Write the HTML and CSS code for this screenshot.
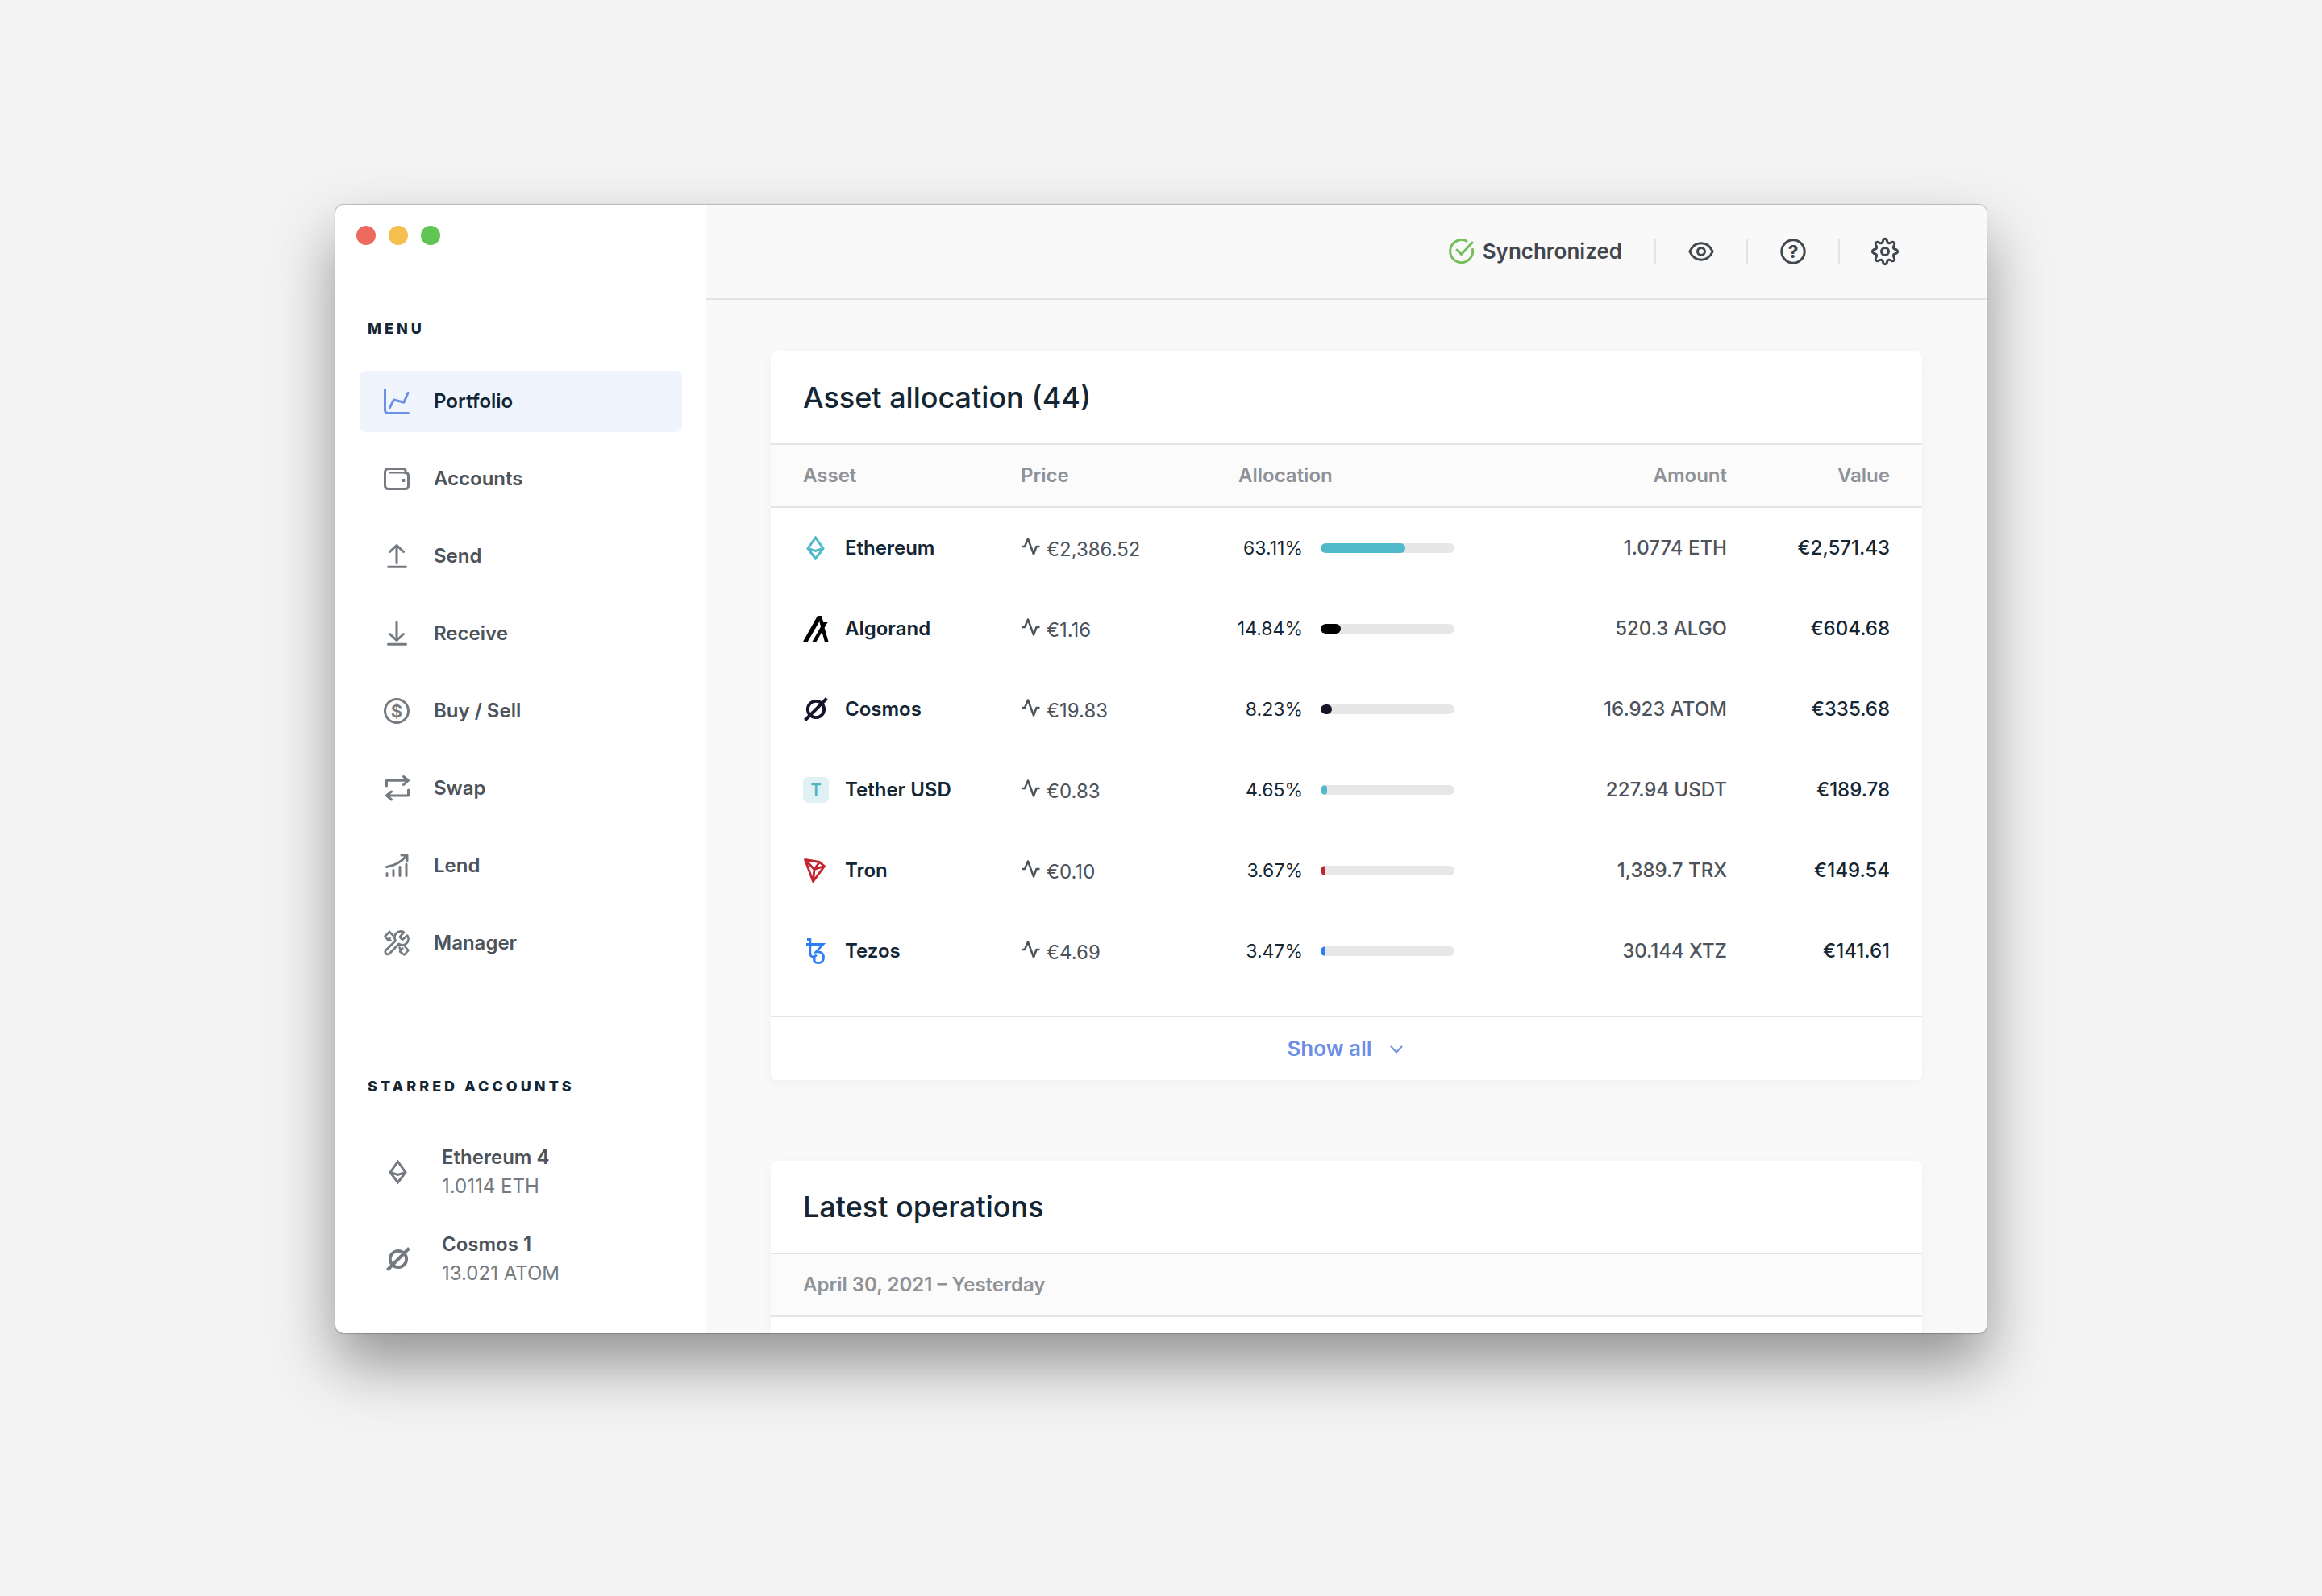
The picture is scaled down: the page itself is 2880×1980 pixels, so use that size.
FILE: index.html
```html
<!DOCTYPE html>
<html lang="en">

<head>
    <meta charset="UTF-8">
    <meta name="viewport" content="width=device-width, initial-scale=1.0">
    <title>Portfolio</title>
    <link rel="stylesheet" href="styles.css">
</head>

<body>

    <!-- Shared icons -->
    <svg class="sprite" aria-hidden="true">
        <symbol id="eth" viewBox="0 0 32 32">
            <path d="M15.500 3L25 16.500L15.500 29L6 16.500ZM6 16.500L15.500 19.500L25 16.500" fill="none" stroke="currentColor" stroke-width="3" />
        </symbol>
        <symbol id="atom" viewBox="0 0 32 32">
            <circle cx="16" cy="16" r="10.2" fill="none" stroke="currentColor" stroke-width="3.8" />
            <path d="M2.5 29.5L29.5 2.5" fill="none" stroke="currentColor" stroke-width="4" />
        </symbol>
        <symbol id="pulse" viewBox="0 0 24 24">
            <path d="M1 12H5L9 2.500L16 21.500L19.500 12H23.500" fill="none" stroke="currentColor" stroke-width="2.500" stroke-linejoin="round" />
        </symbol>
    </svg>

    <div class="window">
        <aside class="sidebar">
            <div class="lights">
                <span class="light red"></span>
                <span class="light yellow"></span>
                <span class="light green"></span>
            </div>

            <h2 class="side-title">MENU</h2>
            <nav class="menu">
                <a href="#" class="menu-item active">
                    <svg class="icon" viewBox="0 0 32 32"><path d="M1.500 1.500V26.500Q1.500 30.500 5.500 30.500H30.500M7.500 23.500L12.500 14L25 17.200L30 5.500" /></svg>
                    Portfolio
                </a>
                <a href="#" class="menu-item">
                    <svg class="icon" viewBox="0 0 32 32"><path d="M27 8V6Q27 3.500 24 3.500H6Q1.500 3.500 1.500 8V24Q1.500 28.500 6 28.500H26.500Q30.500 28.500 30.500 25V12Q30.500 8.500 26.500 8.500" /><path d="M7 8.500H27" stroke-width="2" /><rect class="solid" x="22.500" y="16" width="4" height="4" rx="1" /></svg>
                    Accounts
                </a>
                <a href="#" class="menu-item">
                    <svg class="icon" viewBox="0 0 32 32"><path d="M16 24.500V2.500M7.500 10.500L16 2.500L24.500 10.500M5.500 29.200H27.500" /></svg>
                    Send
                </a>
                <a href="#" class="menu-item">
                    <svg class="icon" viewBox="0 0 32 32"><path d="M16 2V24M7.500 16.500L16 24.500L24.500 16.500M5.500 29.200H27.500" /></svg>
                    Receive
                </a>
                <a href="#" class="menu-item">
                    <svg class="icon" viewBox="0 0 32 32"><circle cx="16" cy="16" r="14.500" /><text x="16" y="24" text-anchor="middle">$</text></svg>
                    Buy / Sell
                </a>
                <a href="#" class="menu-item">
                    <svg class="icon" viewBox="0 0 32 32"><path d="M3.500 13V6.200H30.500M24.500 1.500L30.500 6.200L24.500 11.500M30.500 18V25H3.500M9.500 20L3.500 25L9.500 30" /></svg>
                    Swap
                </a>
                <a href="#" class="menu-item">
                    <svg class="icon" viewBox="0 0 32 32"><path d="M3.500 17.500Q18 15.500 28.500 3.500M22 3H29V10M4 25.500V28.500M12 21.500V28.500M20 17.500V28.500M28 14V28.500" /></svg>
                    Lend
                </a>
                <a href="#" class="menu-item">
                    <svg class="icon" viewBox="0 0 32 32"><path transform="scale(1.333)" stroke-width="2.100" d="M15.500 5.600a1 1 0 0 0 0 1.400l1.200 1.300a1 1 0 0 0 1.400 0l3.800-3.300a5.600 5.600 0 0 1-7.900 7.700l-8.700 9a2.200 2.200 0 0 1-3.300-3.200l9-8.700a5.600 5.600 0 0 1 7.700-7.800z" /><path stroke-width="2.600" d="M11.500 6.500L7 2L1.500 7.500L5 12L7.500 9.500M8.500 12.500L5 12M19.500 21.500L21 24.500L23.500 22.500M21 24.500L20 26.500L25.500 30.500L30.500 25L26.500 20.500" /></svg>
                    Manager
                </a>
            </nav>

            <h2 class="side-title">STARRED ACCOUNTS</h2>
            <div class="starred">
                <a href="#" class="account">
                    <svg class="coin"><use href="#eth" /></svg>
                    <span><strong>Ethereum 4</strong><br>1.0114 ETH</span>
                </a>
                <a href="#" class="account">
                    <svg class="coin"><use href="#atom" /></svg>
                    <span><strong>Cosmos 1</strong><br>13.021 ATOM</span>
                </a>
            </div>
        </aside>

        <main class="main">
            <header class="topbar">
                <div class="sync">
                    <svg class="icon" viewBox="0 0 32 32"><path d="M22 3.200A14 14 0 1 0 29.500 13.500M10 14L15.500 19.500L29 5" /></svg>
                    Synchronized
                </div>
                <button class="tool" aria-label="Hide amounts">
                    <svg class="icon" viewBox="0 0 32 32"><path d="M1.800 16C5 9 10 5.800 16 5.800S27 9 30.200 16C27 23 22 26.200 16 26.200S5 23 1.800 16Z" /><circle cx="16" cy="16" r="4.500" /></svg>
                </button>
                <button class="tool" aria-label="Help">
                    <svg class="icon" viewBox="0 0 32 32"><circle cx="16" cy="16" r="14.200" /><text class="help" x="16" y="24" text-anchor="middle">?</text></svg>
                </button>
                <button class="tool" aria-label="Settings">
                    <svg class="icon" viewBox="0 0 32 32"><path d="M18.200 1.800C19 6 21 6.800 24.500 4.400A2.400 2.400 0 0 1 27.600 7.500C25.200 11 26 13 30.200 13.800A2.400 2.400 0 0 1 30.200 18.200C26 19 25.200 21 27.600 24.500A2.400 2.400 0 0 1 24.500 27.600C21 25.200 19 26 18.200 30.200A2.400 2.400 0 0 1 13.800 30.200C13 26 11 25.200 7.500 27.600A2.400 2.400 0 0 1 4.400 24.500C6.800 21 6 19 1.800 18.200A2.400 2.400 0 0 1 1.800 13.800C6 13 6.800 11 4.400 7.500A2.400 2.400 0 0 1 7.500 4.400C11 6.800 13 6 13.800 1.800A2.400 2.400 0 0 1 18.200 1.800Z" /><circle cx="16" cy="16" r="4.500" /></svg>
                </button>
            </header>

            <div class="content">
                <section class="card">
                    <h1 class="card-title">Asset allocation (44)</h1>
                    <table class="assets">
                        <colgroup>
                            <col class="col-asset">
                            <col class="col-price">
                            <col>
                            <col class="col-amount">
                            <col class="col-value">
                        </colgroup>
                        <thead>
                            <tr>
                                <th>Asset</th>
                                <th>Price</th>
                                <th>Allocation</th>
                                <th class="right">Amount</th>
                                <th class="right">Value</th>
                            </tr>
                        </thead>
                        <tbody>
                            <tr>
                                <td><div class="asset"><svg class="coin teal"><use href="#eth" /></svg>Ethereum</div></td>
                                <td><div class="price"><svg><use href="#pulse" /></svg><span>€2,386.52</span></div></td>
                                <td><div class="share"><span>63.11%</span><div class="bar"><div class="fill teal" style="width: 63.11%"></div></div></div></td>
                                <td class="right amount">1.0774 ETH</td>
                                <td class="right value">€2,571.43</td>
                            </tr>
                            <tr>
                                <td><div class="asset"><svg class="coin black" viewBox="0 0 32 32"><path fill="currentColor" d="M0 32L18 0H23L25.200 8H30.500L26.600 14.700L31.500 32H26.800L23.500 19.800L16.500 32H11.500L22 13.600L20.300 7L5.800 32Z" /></svg>Algorand</div></td>
                                <td><div class="price"><svg><use href="#pulse" /></svg><span>€1.16</span></div></td>
                                <td><div class="share"><span>14.84%</span><div class="bar"><div class="fill black" style="width: 14.84%"></div></div></div></td>
                                <td class="right amount">520.3 ALGO</td>
                                <td class="right value">€604.68</td>
                            </tr>
                            <tr>
                                <td><div class="asset"><svg class="coin navy"><use href="#atom" /></svg>Cosmos</div></td>
                                <td><div class="price"><svg><use href="#pulse" /></svg><span>€19.83</span></div></td>
                                <td><div class="share"><span>8.23%</span><div class="bar"><div class="fill navy" style="width: 8.23%"></div></div></div></td>
                                <td class="right amount">16.923 ATOM</td>
                                <td class="right value">€335.68</td>
                            </tr>
                            <tr>
                                <td><div class="asset"><span class="coin token">T</span>Tether USD</div></td>
                                <td><div class="price"><svg><use href="#pulse" /></svg><span>€0.83</span></div></td>
                                <td><div class="share"><span>4.65%</span><div class="bar"><div class="fill teal" style="width: 4.65%"></div></div></div></td>
                                <td class="right amount">227.94 USDT</td>
                                <td class="right value">€189.78</td>
                            </tr>
                            <tr>
                                <td><div class="asset"><svg class="coin crimson" viewBox="0 0 32 32"><path d="M2.500 2.500L20.500 5.500L26.500 10.500L12.500 29.500ZM2.500 2.500L14 14.500L26.500 10.500M14 14.500L12.500 29.500M14 14.500L20.500 5.500" fill="none" stroke="currentColor" stroke-width="2.800" stroke-linejoin="round" /></svg>Tron</div></td>
                                <td><div class="price"><svg><use href="#pulse" /></svg><span>€0.10</span></div></td>
                                <td><div class="share"><span>3.67%</span><div class="bar"><div class="fill crimson" style="width: 3.67%"></div></div></div></td>
                                <td class="right amount">1,389.7 TRX</td>
                                <td class="right value">€149.54</td>
                            </tr>
                            <tr>
                                <td><div class="asset"><svg class="coin blue" viewBox="0 0 32 32"><path d="M5 1.500H8.800V18Q9 23 12.500 23Q15.500 23 16.500 20.500M4 7.500H25L16 17Q25.500 16 25.500 23.500Q25.500 30.500 19 30.500Q13.500 30.500 13.500 26.500H15.500" fill="none" stroke="currentColor" stroke-width="2.800" /></svg>Tezos</div></td>
                                <td><div class="price"><svg><use href="#pulse" /></svg><span>€4.69</span></div></td>
                                <td><div class="share"><span>3.47%</span><div class="bar"><div class="fill blue" style="width: 3.47%"></div></div></div></td>
                                <td class="right amount">30.144 XTZ</td>
                                <td class="right value">€141.61</td>
                            </tr>
                        </tbody>
                    </table>
                    <button class="show-all">
                        Show all
                        <svg viewBox="0 0 16 12"><path d="M1 3L8 10.500L15 3" fill="none" stroke="currentColor" stroke-width="2" /></svg>
                    </button>
                </section>

                <section class="card">
                    <h1 class="card-title">Latest operations</h1>
                    <h3 class="day">April 30, 2021 – Yesterday</h3>
                    <div class="operations"></div>
                </section>
            </div>
        </main>
    </div>

</body>

</html>
```

FILE: styles.css
```css
/* Reset Styles */
* {
    box-sizing: border-box;
    margin: 0;
    padding: 0;
}

/* Body Styles */
body {
    height: 100vh;
    padding: 254px 416px 326px;
    background-color: #f3f3f3;
    color: #142533;
    font-family: Inter, "Liberation Sans", sans-serif;
    font-size: 24px;
    line-height: 36px;
}

a {
    color: inherit;
    text-decoration: none;
}

button {
    border: none;
    background: none;
    font: inherit;
    cursor: pointer;
}

.sprite {
    position: absolute;
    width: 0;
    height: 0;
}

/* Window */
.window {
    display: flex;
    height: 100%;
    border-radius: 10px;
    overflow: hidden;
    background-color: #fff;
    box-shadow: 0 0 1px 1px rgba(0, 0, 0, 0.2), 0 38px 76px rgba(0, 0, 0, 0.4);
}

/* Sidebar */
.sidebar {
    flex: none;
    width: 460px;
    padding: 26px 30px;
    color: #4d535b;
}

.lights {
    display: flex;
    gap: 16px;
    margin: 0 -4px 91px;
}

.light {
    width: 24px;
    height: 24px;
    border-radius: 50%;
}

.light.red {
    background-color: #ed6a5e;
}

.light.yellow {
    background-color: #f5bf4f;
}

.light.green {
    background-color: #61c554;
}

.side-title {
    padding-left: 10px;
    color: #142533;
    font-size: 18px;
    font-weight: 800;
    line-height: 26px;
    letter-spacing: 4px;
}

.menu {
    display: flex;
    flex-direction: column;
    gap: 20px;
    margin: 39px 0 127px;
}

.menu-item {
    display: flex;
    align-items: center;
    gap: 30px;
    height: 76px;
    padding: 0 30px;
    border-radius: 8px;
    font-weight: 600;
}

.menu-item.active {
    background-color: #f0f4fd;
    color: #142533;
}

.menu-item .icon {
    color: #757a80;
}

.menu-item.active .icon {
    color: #6b8fe6;
}

/* Icons */
.icon {
    flex: none;
    width: 32px;
    height: 32px;
    overflow: visible;
    fill: none;
    stroke: currentColor;
    stroke-width: 3;
    stroke-linecap: round;
    stroke-linejoin: round;
}

.icon text {
    fill: currentColor;
    stroke: none;
    font-size: 22px;
    font-weight: 600;
}

.icon .help {
    font-weight: 800;
}

.icon .solid {
    fill: currentColor;
    stroke: none;
}

.coin {
    flex: none;
    width: 32px;
    height: 32px;
}

/* Starred Accounts */
.starred {
    display: flex;
    flex-direction: column;
    gap: 36px;
    margin-top: 57px;
}

.account {
    display: flex;
    align-items: center;
    gap: 38px;
    padding-left: 32px;
    color: #757a80;
}

.account strong {
    color: #4d535b;
    font-weight: 600;
}

/* Main */
.main {
    display: flex;
    flex: 1;
    flex-direction: column;
    min-width: 0;
    background-color: #f9f9f9;
}

.topbar {
    display: flex;
    flex: none;
    align-items: center;
    justify-content: flex-end;
    height: 118px;
    padding-right: 70px;
    border-bottom: 2px solid #e4e4e4;
    color: #41474f;
}

.sync {
    display: flex;
    align-items: center;
    gap: 10px;
    padding-right: 40px;
    font-size: 26px;
    font-weight: 600;
}

.sync .icon {
    color: #74be5c;
}

.tool {
    display: flex;
    align-items: center;
    height: 32px;
    padding: 0 40px;
    border-left: 2px solid #e4e4e4;
    color: #41474f;
}

.content {
    display: flex;
    flex: 1;
    flex-direction: column;
    gap: 100px;
    min-height: 0;
    padding: 64px 80px 0;
    overflow: hidden;
}

/* Cards */
.card {
    flex: none;
    border-radius: 8px;
    background-color: #fff;
    box-shadow: 0 4px 16px rgba(0, 0, 0, 0.04);
}

.card-title {
    height: 114px;
    padding: 0 40px;
    font-size: 36px;
    font-weight: 500;
    line-height: 114px;
}

.assets {
    width: 100%;
    border-collapse: separate;
    border-spacing: 0;
    table-layout: fixed;
}

.col-asset {
    width: 310px;
}

.col-price {
    width: 270px;
}

.col-amount {
    width: 270px;
}

.col-value {
    width: 242px;
}

.assets th,
.day {
    height: 80px;
    border-top: 2px solid #e4e4e4;
    border-bottom: 2px solid #e4e4e4;
    background-color: #fbfbfb;
    color: #8e9296;
    font-size: 24px;
    font-weight: 600;
    line-height: 76px;
    text-align: left;
}

.assets td {
    height: 100px;
    color: #4d535b;
}

.assets tr > :first-child,
.day {
    padding-left: 40px;
}

.assets tr > :last-child {
    padding-right: 40px;
}

.assets .right {
    text-align: right;
}

.assets .amount,
.assets .value {
    font-weight: 500;
}

.assets .value {
    color: #142533;
}

.asset {
    display: flex;
    align-items: center;
    gap: 20px;
    color: #142533;
    font-weight: 600;
}

.token {
    border-radius: 6px;
    background-color: #dff1f3;
    color: #50b5c1;
    font-size: 20px;
    line-height: 32px;
    text-align: center;
}

.price {
    display: flex;
    align-items: flex-start;
    gap: 8px;
    padding-top: 4px;
}

.price svg {
    width: 24px;
    height: 28px;
}

.share {
    display: flex;
    align-items: center;
    gap: 22px;
    color: #142533;
    font-size: 23px;
}

.share span {
    display: flex;
    justify-content: flex-end;
    width: 80px;
}

.bar {
    width: 166px;
    height: 12px;
    border-radius: 6px;
    overflow: hidden;
    background-color: #e7e7e7;
}

.fill {
    height: 100%;
    border-radius: 6px;
    background-color: currentColor;
}

/* Coin Colors */
.teal {
    color: #50b9ca;
}

.black {
    color: #000;
}

.navy {
    color: #16142b;
}

.crimson {
    color: #c4242f;
}

.blue {
    color: #2f7df6;
}

.show-all {
    display: flex;
    align-items: center;
    justify-content: center;
    gap: 22px;
    width: 100%;
    height: 80px;
    margin-top: 30px;
    padding-right: 4px;
    border-top: 2px solid #e4e4e4;
    color: #6b8fe6;
    font-size: 26px;
    font-weight: 600;
}

.show-all svg {
    width: 16px;
    height: 12px;
}

.operations {
    height: 100px;
}
```
